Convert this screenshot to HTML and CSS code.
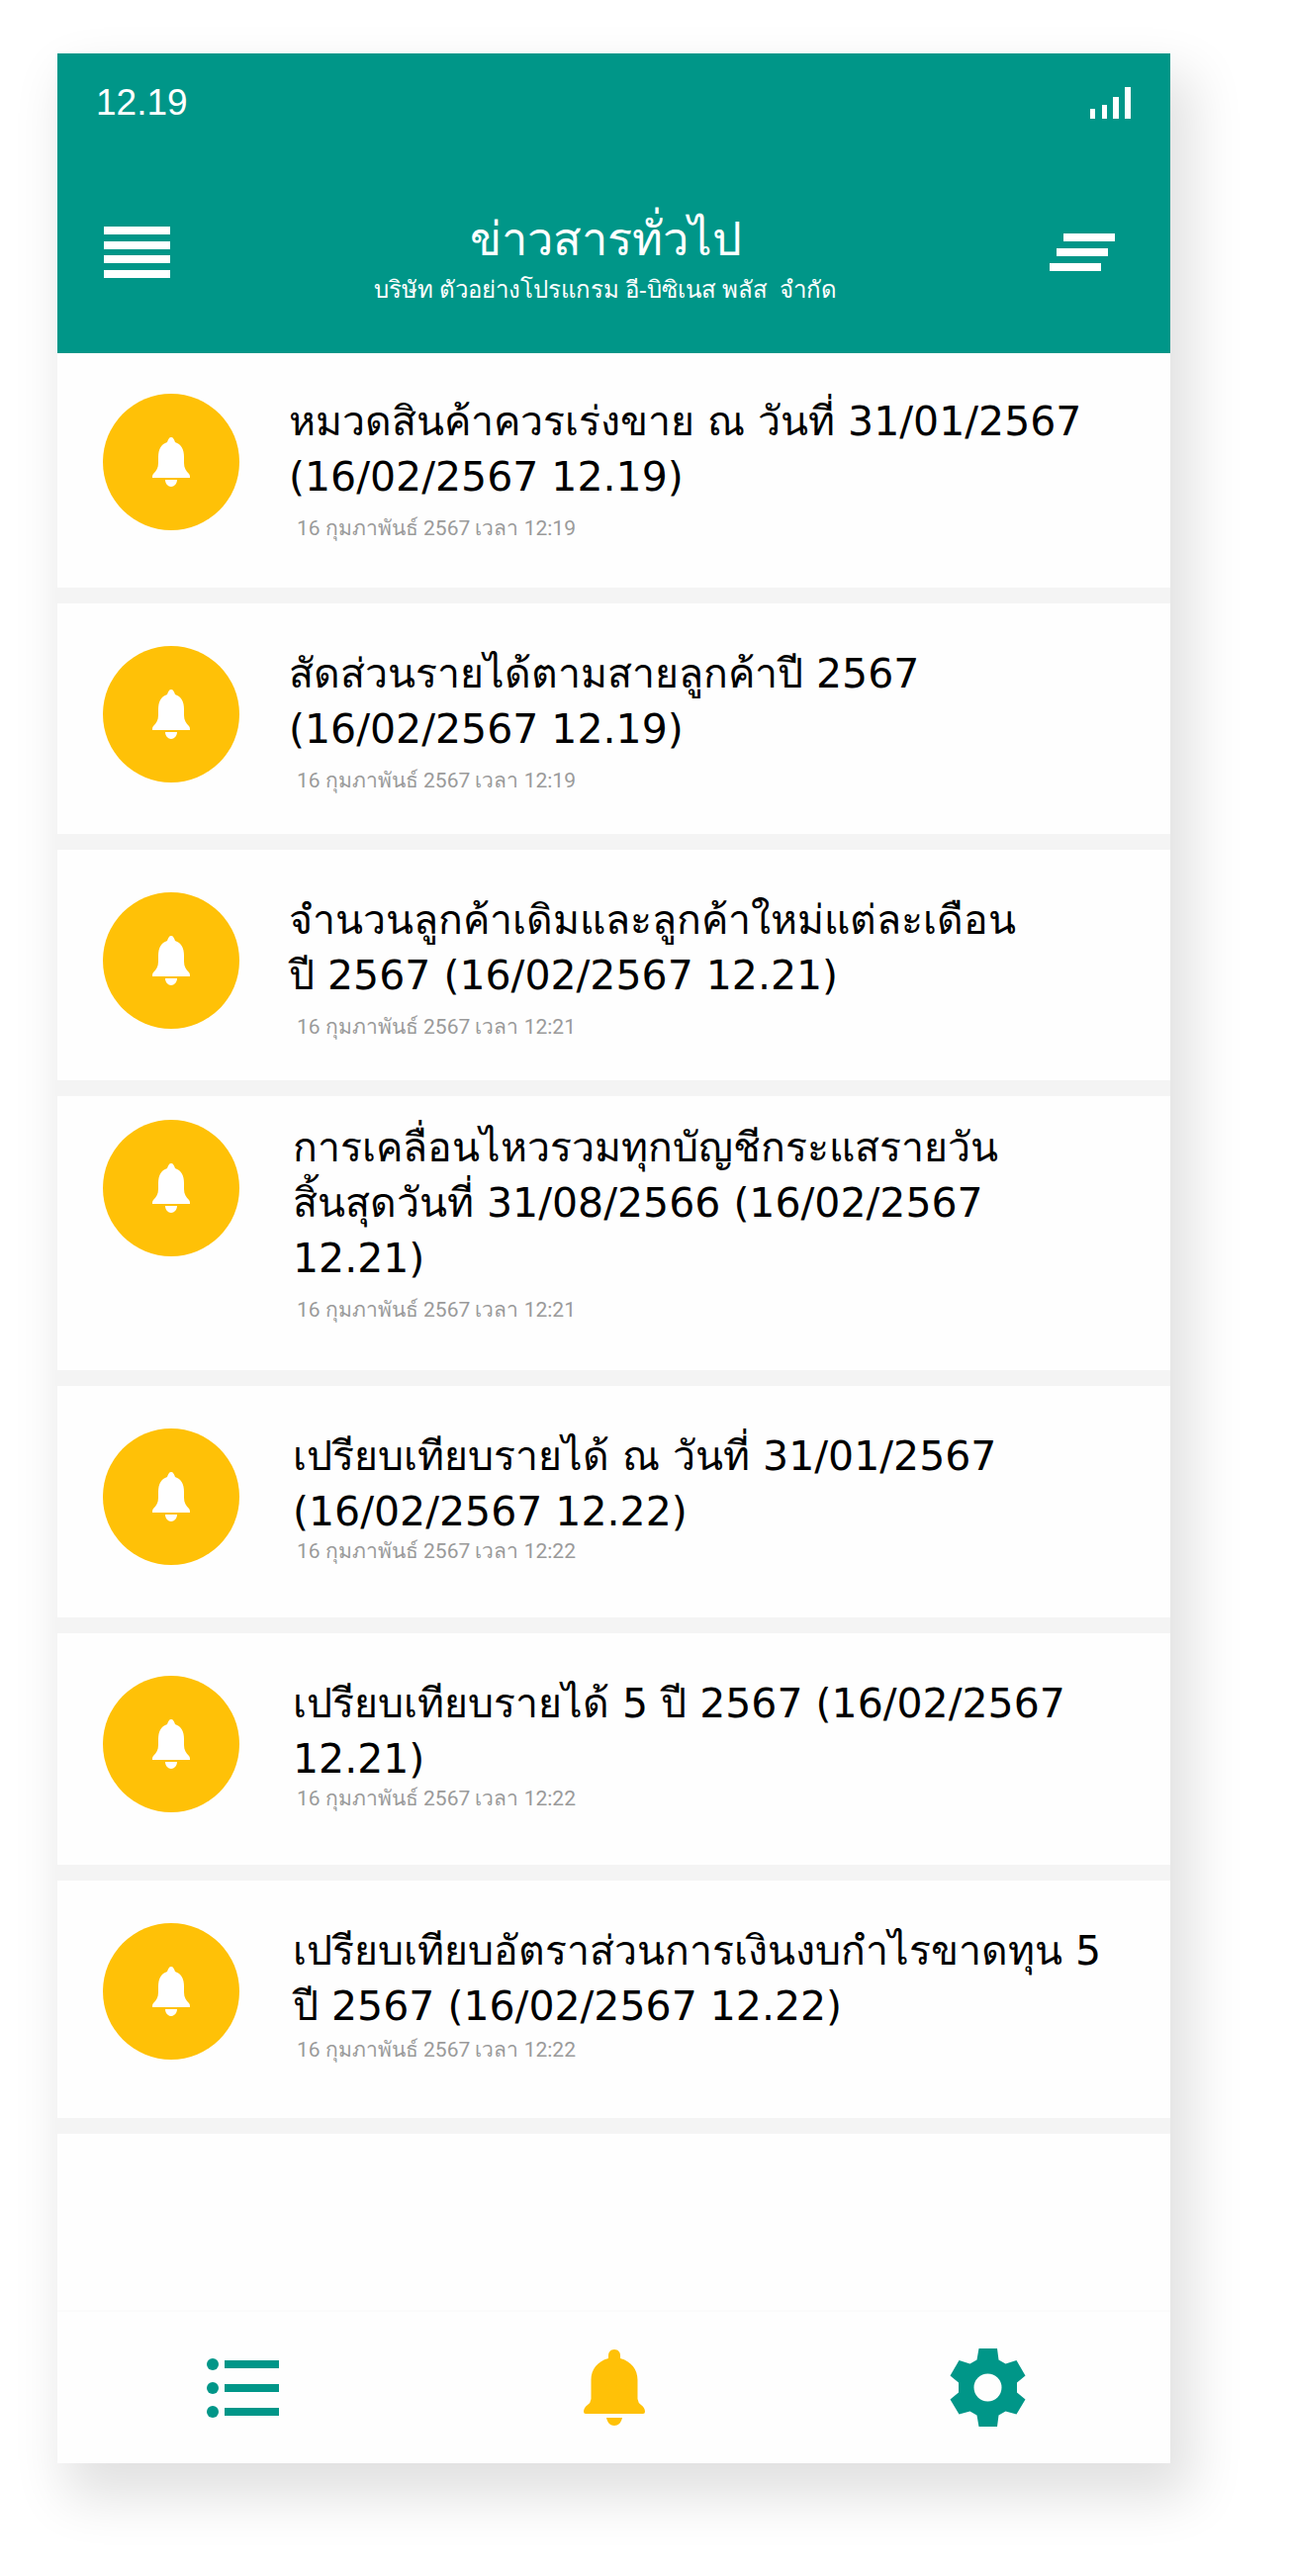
FILE: index.html
```html
<!DOCTYPE html>
<html lang="th">
<head>
<meta charset="utf-8">
<meta name="viewport" content="width=device-width, initial-scale=1">
<title>ข่าวสารทั่วไป</title>
<link rel="stylesheet" href="styles.css">
</head>
<body>
<svg class="sprite" aria-hidden="true">
  <symbol id="bell" viewBox="0 0 40 50">
    <path d="M20 0C22 0 23 2 24 5C30 7 33 12 33 20V26C33 31 35 34 38 37Q39 38 39 40V41H1V40Q1 38 2 37C5 34 7 31 7 26V20C7 12 10 7 16 5C17 2 18 0 20 0ZM14 43H26C26 47 23 50 20 50C17 50 14 47 14 43Z"/>
  </symbol>
</svg>
<div class="screen">
  <header class="header">
    <div class="status">
      <span>12.19</span>
      <svg width="43" height="32" viewBox="0 0 43 32" fill="currentColor" role="img" aria-label="สัญญาณ"><path d="M1 22h5v10H1zM13 18h5v14h-5zM24 10h6v22h-6zM36 0h6v32h-6z"/></svg>
    </div>
    <div class="bar">
      <button class="bar-button" type="button" aria-label="เมนู">
        <svg width="67" height="52" viewBox="0 0 67 52" fill="currentColor"><path d="M0 0h67v8H0zM0 15h67v8H0zM0 29h67v8H0zM0 44h67v8H0z"/></svg>
      </button>
      <div class="heading">
        <h1>ข่าวสารทั่วไป</h1>
        <p>บริษัท ตัวอย่างโปรแกรม อี-บิซิเนส พลัส &nbsp;จำกัด</p>
      </div>
      <button class="bar-button bar-button-end" type="button" aria-label="ล้างรายการ">
        <svg width="66" height="38" viewBox="0 0 66 38" fill="currentColor"><path d="M14 0h52v8H14zM7 15h52v8H7zM0 30h52v8H0z"/></svg>
      </button>
    </div>
  </header>

  <main class="list">
    <article class="item item-first">
      <span class="avatar"><svg><use href="#bell"/></svg></span>
      <div class="body">
        <h2>หมวดสินค้าควรเร่งขาย ณ วันที่ 31/01/2567<br>(16/02/2567 12.19)</h2>
        <time datetime="2024-02-16T12:19">16 กุมภาพันธ์ 2567 เวลา 12:19</time>
      </div>
    </article>
    <article class="item">
      <span class="avatar"><svg><use href="#bell"/></svg></span>
      <div class="body">
        <h2>สัดส่วนรายได้ตามสายลูกค้าปี 2567<br>(16/02/2567 12.19)</h2>
        <time datetime="2024-02-16T12:19">16 กุมภาพันธ์ 2567 เวลา 12:19</time>
      </div>
    </article>
    <article class="item">
      <span class="avatar"><svg><use href="#bell"/></svg></span>
      <div class="body">
        <h2>จำนวนลูกค้าเดิมและลูกค้าใหม่แต่ละเดือน<br>ปี 2567 (16/02/2567 12.21)</h2>
        <time datetime="2024-02-16T12:21">16 กุมภาพันธ์ 2567 เวลา 12:21</time>
      </div>
    </article>
    <article class="item item-long">
      <span class="avatar"><svg><use href="#bell"/></svg></span>
      <div class="body">
        <h2>การเคลื่อนไหวรวมทุกบัญชีกระแสรายวัน<br>สิ้นสุดวันที่ 31/08/2566 (16/02/2567<br>12.21)</h2>
        <time datetime="2024-02-16T12:21">16 กุมภาพันธ์ 2567 เวลา 12:21</time>
      </div>
    </article>
    <article class="item item-tight">
      <span class="avatar"><svg><use href="#bell"/></svg></span>
      <div class="body">
        <h2>เปรียบเทียบรายได้ ณ วันที่ 31/01/2567<br>(16/02/2567 12.22)</h2>
        <time datetime="2024-02-16T12:22">16 กุมภาพันธ์ 2567 เวลา 12:22</time>
      </div>
    </article>
    <article class="item item-tight">
      <span class="avatar"><svg><use href="#bell"/></svg></span>
      <div class="body">
        <h2>เปรียบเทียบรายได้ 5 ปี 2567 (16/02/2567<br>12.21)</h2>
        <time datetime="2024-02-16T12:22">16 กุมภาพันธ์ 2567 เวลา 12:22</time>
      </div>
    </article>
    <article class="item item-tight item-last">
      <span class="avatar"><svg><use href="#bell"/></svg></span>
      <div class="body">
        <h2>เปรียบเทียบอัตราส่วนการเงินงบกำไรขาดทุน 5<br>ปี 2567 (16/02/2567 12.22)</h2>
        <time datetime="2024-02-16T12:22">16 กุมภาพันธ์ 2567 เวลา 12:22</time>
      </div>
    </article>
  </main>

  <nav class="tabs">
    <a href="#list" aria-label="รายการ">
      <svg width="73" height="60" viewBox="0 0 73 60" fill="currentColor"><circle cx="6" cy="6" r="6"/><circle cx="6" cy="30" r="6"/><circle cx="6" cy="54" r="6"/><path d="M18 2h55v8H18zM18 26h55v8H18zM18 50h55v8H18z"/></svg>
    </a>
    <a class="active" href="#news" aria-label="ข่าวสาร">
      <svg width="64" height="78" viewBox="0 0 64 78" fill="currentColor"><path d="M32 0C36 0 38 3 38 6V9C49 12 55.500 20 55.500 31V50Q56 54 59 56Q63 59 63 63Q63 65 61 65H3Q1 65 1 63Q1 59 5 56Q8 54 8.500 50V31C8.500 20 15 12 26 9V6C26 3 28 0 32 0ZM24 69H40C39 74 36 77 32 77C28 77 25 74 24 69Z"/></svg>
    </a>
    <a href="#settings" aria-label="ตั้งค่า">
      <svg width="77" height="79" viewBox="-38.500 -39.500 77 79" fill="currentColor"><path fill-rule="evenodd" d="M-9-39.500H9.500L11-28L18-24L29-27.500L38-12L29.500-5V5L38 12L29 27L18 24L11 28L9.500 39.500H-9L-11 28L-18 24L-29 27L-38 12L-29.500 5V-5L-38-12L-29-27.500L-18-24L-11-28ZM0-14A14 14 0 1 0 0 14A14 14 0 1 0 0-14Z"/></svg>
    </a>
  </nav>
</div>
</body>
</html>
```
FILE: styles.css
```css
* { box-sizing: border-box; }

body {
  margin: 0;
  padding: 54px 120px 114px 58px;
  background: #fff;
  color: #000;
  font-family: "DejaVu Sans", sans-serif;
}

h1, h2, p { margin: 0; font-weight: 400; }
svg { display: block; }
.sprite { position: absolute; width: 0; height: 0; }

.screen {
  background: #fefefe;
  box-shadow: 15px 28px 50px 7px rgba(0, 0, 0, 0.12);
}

/* Header */
.header {
  padding: 28px 39px 47px 39px;
  background: #009688;
  color: #fff;
}

.status {
  display: flex;
  align-items: center;
  justify-content: space-between;
  height: 44px;
  font-family: "Liberation Sans", sans-serif;
  font-size: 37px;
}

.bar {
  display: flex;
  align-items: center;
  padding: 74px 17px 0 8px;
}

.bar-button {
  padding: 0;
  border: 0;
  background: none;
  color: inherit;
}

.bar-button-end { padding-left: 9px; }

.heading {
  flex: 1;
  padding-top: 10px;
  text-align: center;
  white-space: nowrap;
}

.heading h1 { font-size: 47px; line-height: 64px; }
.heading p {
  font-family: "Noto Sans", sans-serif;
  font-size: 24px;
  line-height: 36px;
}

/* News list */
.list { min-height: 1978px; }

.item {
  display: flex;
  align-items: flex-start;
  gap: 50px;
  padding: 43px 24px 42px 46px;
  border-bottom: 16px solid #f4f4f4;
}

.avatar {
  display: grid;
  flex: none;
  place-items: center;
  width: 138px;
  height: 138px;
  border-radius: 50%;
  background: #ffc107;
  color: #fff;
}

.avatar svg { width: 40px; height: 50px; fill: currentColor; }

.body { flex: 1; min-width: 0; }
.body h2 { font-size: 41px; line-height: 56px; }
.body time {
  display: block;
  padding: 12px 0 0 8px;
  color: #9a9a9a;
  font-family: Roboto, sans-serif;
  font-size: 21px;
  line-height: 24px;
}

.item-first { padding-top: 41px; padding-bottom: 48px; }
.item-long { padding-top: 24px; padding-bottom: 49px; }
.item-tight { padding-bottom: 53px; }
.item-tight time { padding-top: 0; }
.item-last { padding-bottom: 57px; }
.item-last time { padding-top: 4px; }
.item-long h2, .item-tight h2 { padding-left: 4px; }

/* Bottom tabs */
.tabs {
  display: flex;
  align-items: center;
  justify-content: space-between;
  height: 155px;
  padding: 0 146px 0 151px;
  border-top: 2px solid #fbfbfb;
}

.tabs a { color: #009688; }
.tabs .active { color: #ffc107; }
```
